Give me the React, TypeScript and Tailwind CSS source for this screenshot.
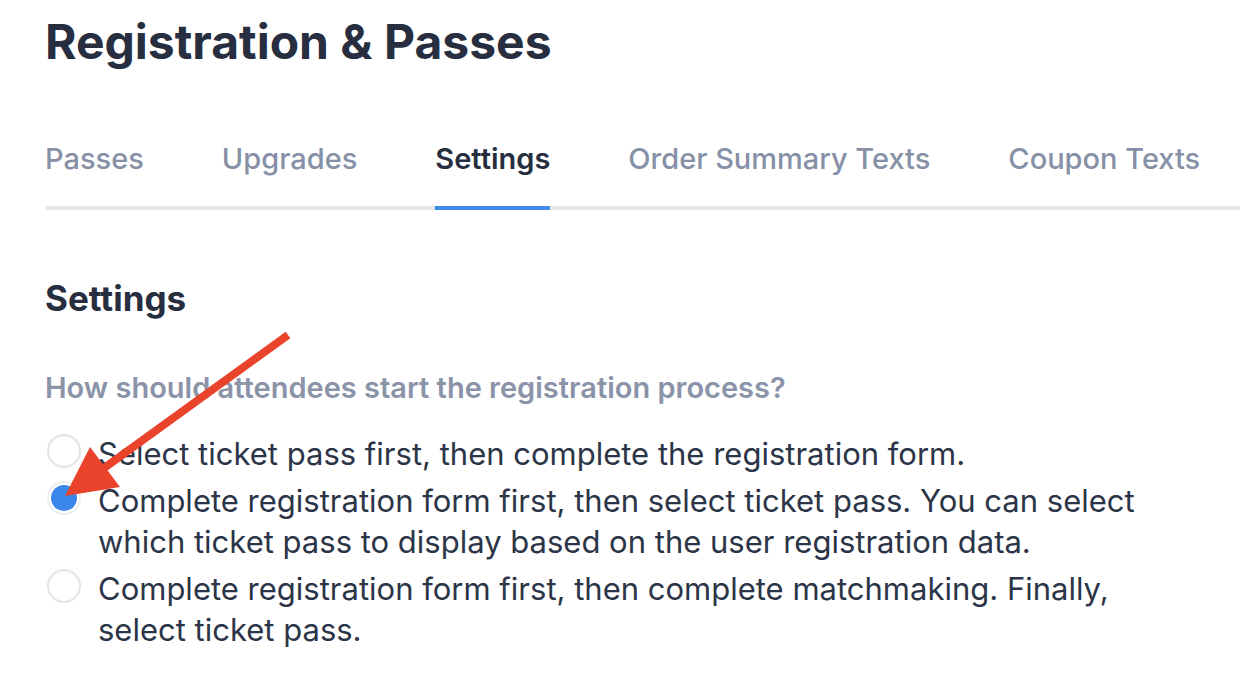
import { useState } from "react";

const tabs = ["Passes", "Upgrades", "Settings", "Order Summary Texts", "Coupon Texts"];

const options = [
  ["Select ticket pass first, then complete the registration form."],
  [
    "Complete registration form first, then select ticket pass. You can select",
    "which ticket pass to display based on the user registration data.",
  ],
  [
    "Complete registration form first, then complete matchmaking. Finally,",
    "select ticket pass.",
  ],
];

export default function App() {
  const [active] = useState("Settings");
  const [selected, setSelected] = useState(1);

  return (
    <div
      className="relative w-[1240px] h-[688px] overflow-hidden bg-white pl-[45px]"
      style={{ fontFamily: "Inter, 'Noto Sans', sans-serif" }}
    >
      <h1 className="mt-[12px] text-[48px] leading-[60px] font-bold text-[#262e40]">
        Registration &amp; Passes
      </h1>

      {/* Tabs */}
      <div className="mt-[67px] flex gap-[78px] border-b-4 border-[#e6e8ef]">
        {tabs.map((t) => (
          <button
            key={t}
            className={`-mb-1 pb-[27px] text-[29px] leading-[40px] border-b-4 ${
              t === active
                ? "font-semibold text-[#262e40] border-[#3f8fe9]"
                : "font-medium text-[#8690a6] border-transparent"
            }`}
          >
            {t}
          </button>
        ))}
      </div>

      <h2 className="mt-[68px] text-[35px] leading-[40px] font-bold text-[#262e40]">
        Settings
      </h2>

      <p className="mt-[52px] text-[29px] leading-[36px] font-semibold text-[#8a93a8]">
        How should attendees start the registration process?
      </p>

      <div className="mt-[27px] flex flex-col gap-[6px]">
        {options.map((lines, i) => (
          <label key={i} className="flex items-start gap-[17px] cursor-pointer" onClick={() => setSelected(i)}>
            <span
              className={`ml-[2px] mt-[1px] flex h-[34px] w-[34px] shrink-0 items-center justify-center rounded-full border-2 ${
                selected === i
                  ? "border-[#eceef2] bg-white"
                  : "border-[#e4e4e4] bg-white shadow-[inset_0_1px_2px_rgba(0,0,0,0.04)]"
              }`}
            >
              {selected === i && <span className="h-[26px] w-[26px] rounded-full bg-[#3a86ea]" />}
            </span>
            <span className="text-[31px] leading-[41px] text-[#2c3548] whitespace-nowrap">
              {lines.map((l, j) => (
                <span key={j} className="block">
                  {l}
                </span>
              ))}
            </span>
          </label>
        ))}
      </div>

      {/* Annotation arrow */}
      <svg
        className="pointer-events-none absolute inset-0"
        width="1240"
        height="688"
        viewBox="0 0 1240 688"
      >
        <line x1="288" y1="335" x2="100" y2="471" stroke="#e9432b" strokeWidth="8" />
        <polygon points="65,496 90,447 120,487" fill="#e9432b" />
      </svg>
    </div>
  );
}
